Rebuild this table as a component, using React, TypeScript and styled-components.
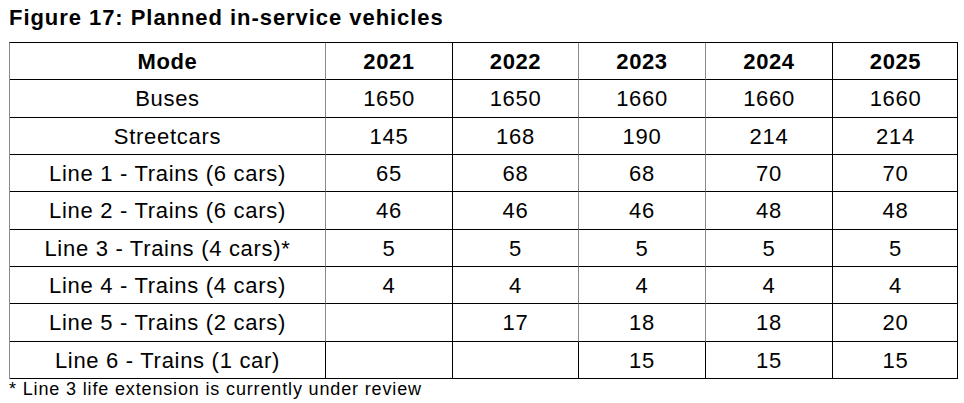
import React from "react";
import styled, { createGlobalStyle } from "styled-components";

const Global = createGlobalStyle`
  html, body { margin: 0; padding: 0; background: #fff; }
  body { font-family: "Liberation Sans", Arial, sans-serif; color: #000; }
`;

const Page = styled.div`
  padding: 5px 0 0 9px;
  width: 964px;
  box-sizing: border-box;
`;

const Title = styled.h1`
  margin: 0 0 12px 0;
  font-size: 22px;
  line-height: 25px;
  font-weight: 700;
  letter-spacing: 0.95px;
`;

const Grid = styled.div`
  display: grid;
  grid-template-columns: 316px 127px 126px 127px 127px 125px;
  grid-template-rows: 37px 38px 37px 37px 38px 37px 37px 38px 37px;
  width: 949px;
  box-sizing: border-box;
  border-top: 1px solid #000;
  border-left: 1px solid #8a8a8a;
  border-right: 1px solid #000;
`;

const Cell = styled.div<{ $head?: boolean; $grayRight?: boolean }>`
  box-sizing: border-box;
  display: flex;
  align-items: center;
  justify-content: center;
  padding-top: 1px;
  border-bottom: 1px solid #000;
  border-right: 1px solid ${(p) => (p.$grayRight ? "#8a8a8a" : "#000")};
  font-size: 22px;
  font-weight: ${(p) => (p.$head ? 700 : 400)};
  letter-spacing: ${(p) => (p.$head ? "0.6px" : "0.7px")};
  white-space: nowrap;
`;

const Row = styled.div`
  display: contents;
  & > div:last-child { border-right: none; }
`;

const Note = styled.p`
  margin: 0;
  font-size: 18px;
  line-height: 20px;
  letter-spacing: 0.85px;
`;

const years = ["2021", "2022", "2023", "2024", "2025"];

const rows: [string, string[]][] = [
  ["Buses", ["1650", "1650", "1660", "1660", "1660"]],
  ["Streetcars", ["145", "168", "190", "214", "214"]],
  ["Line 1 - Trains (6 cars)", ["65", "68", "68", "70", "70"]],
  ["Line 2 - Trains (6 cars)", ["46", "46", "46", "48", "48"]],
  ["Line 3 - Trains (4 cars)*", ["5", "5", "5", "5", "5"]],
  ["Line 4 - Trains (4 cars)", ["4", "4", "4", "4", "4"]],
  ["Line 5 - Trains (2 cars)", ["", "17", "18", "18", "20"]],
  ["Line 6 - Trains (1 car)", ["", "", "15", "15", "15"]],
];

// which column right borders render gray (indices 0..5)
const grayCols = [true, false, true, true, false, false];

export default function App() {
  return (
    <>
      <Global />
      <Page>
        <Title>Figure 17: Planned in-service vehicles</Title>
        <Grid>
          <Row>
            {["Mode", ...years].map((h, i) => (
              <Cell key={h} $head $grayRight={grayCols[i]}>
                {h}
              </Cell>
            ))}
          </Row>
          {rows.map(([mode, vals], r) => (
            <Row key={mode}>
              {[mode, ...vals].map((v, i) => (
                <Cell key={i} $grayRight={r < rows.length - 1 && grayCols[i]}>
                  {v}
                </Cell>
              ))}
            </Row>
          ))}
        </Grid>
        <Note>* Line 3 life extension is currently under review</Note>
      </Page>
    </>
  );
}
